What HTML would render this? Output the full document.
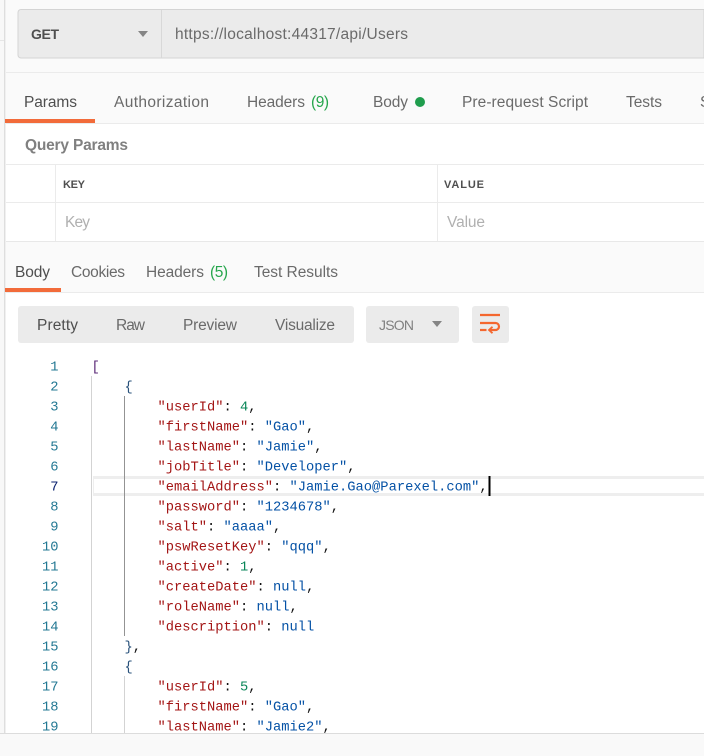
<!DOCTYPE html>
<html><head><meta charset="utf-8"><style>
html,body{margin:0;padding:0;background:#fff;width:704px;height:756px;overflow:hidden}
svg{display:block}
text{white-space:pre}
.u{font-family:"Liberation Sans",sans-serif;font-size:15.5px;fill:#6a6a6a}
.d{fill:#4f4f4f}
.b{font-weight:bold}
.g{fill:#26a64c}
.c{font-family:"Liberation Mono",monospace;font-size:13.75px;fill:#111}
.n{fill:#237893}
.k{fill:#a31515}
.s{fill:#0451a5}
.m{fill:#098658}
</style></head><body>
<svg width="704" height="756" viewBox="0 0 704 756" xmlns="http://www.w3.org/2000/svg">
<rect width="704" height="756" fill="#fff"/>
<!-- top request bar -->
<rect x="5" y="0" width="699" height="123" fill="#fafafa"/>
<rect x="5" y="72" width="699" height="1" fill="#ebebeb"/>
<rect x="5" y="123" width="699" height="1" fill="#ebebeb"/>
<path d="M704 9.5H21a3 3 0 0 0-3 3V55a3 3 0 0 0 3 3H704Z" fill="#ebebeb" stroke="#d4d4d4"/>
<rect x="161" y="10" width="1" height="48" fill="#d8d8d8"/>
<text class="u d b" x="31" y="39" textLength="28" style="font-size:14px">GET</text>
<path d="M138 31h10l-5 6z" fill="#858585"/>
<text class="u" x="175" y="39" textLength="233">https://localhost:44317/api/Users</text>
<!-- request tabs -->
<text class="u d" x="24" y="107" textLength="53">Params</text>
<rect x="5" y="119" width="90" height="4" fill="#f26b3a"/>
<text class="u" x="114" y="107" textLength="95">Authorization</text>
<text class="u" x="247" y="107" textLength="58">Headers</text>
<text class="u g" x="311" y="107" textLength="18">(9)</text>
<text class="u" x="373" y="107" textLength="35">Body</text>
<circle cx="420" cy="102" r="5" fill="#1f9d4d"/>
<text class="u" x="462" y="107" textLength="126">Pre-request Script</text>
<text class="u" x="626" y="107" textLength="36">Tests</text>
<text class="u" x="700" y="107">S</text>
<!-- query params -->
<text class="u b" x="25" y="150" textLength="103" style="fill:#808080">Query Params</text>
<rect x="5" y="164" width="699" height="1" fill="#ebebeb"/>
<rect x="5" y="202" width="699" height="1" fill="#ebebeb"/>
<rect x="55" y="165" width="1" height="76" fill="#ebebeb"/>
<rect x="437" y="165" width="1" height="76" fill="#ebebeb"/>
<text class="u d b" x="63" y="188" textLength="22" style="font-size:11px">KEY</text>
<text class="u d b" x="444" y="188" textLength="40" style="font-size:11px">VALUE</text>
<text class="u" x="65" y="227" textLength="25" style="fill:#b0b0b0">Key</text>
<text class="u" x="447" y="227" textLength="38" style="fill:#b0b0b0">Value</text>
<!-- response tabs -->
<rect x="5" y="241" width="699" height="51" fill="#fafafa"/>
<rect x="5" y="241" width="699" height="1" fill="#e8e8e8"/>
<rect x="5" y="292" width="699" height="1" fill="#ebebeb"/>
<text class="u d" x="15" y="277" textLength="35">Body</text>
<rect x="5" y="288" width="56" height="4" fill="#f26b3a"/>
<text class="u" x="71" y="277" textLength="54">Cookies</text>
<text class="u" x="146" y="277" textLength="58">Headers</text>
<text class="u g" x="210" y="277" textLength="18">(5)</text>
<text class="u" x="254" y="277" textLength="84">Test Results</text>
<!-- view toolbar -->
<rect x="18" y="306" width="336" height="37" rx="3" fill="#ebebeb"/>
<text class="u d" x="37" y="330" textLength="41">Pretty</text>
<text class="u" x="116" y="330" textLength="29">Raw</text>
<text class="u" x="183" y="330" textLength="54">Preview</text>
<text class="u" x="275" y="330" textLength="60">Visualize</text>
<rect x="366" y="306" width="93" height="37" rx="3" fill="#ebebeb"/>
<text class="u" x="379" y="330" textLength="35" style="fill:#808080;font-size:14px">JSON</text>
<path d="M432 321h10l-5 6z" fill="#858585"/>
<rect x="472" y="306" width="37" height="37" rx="3" fill="#ebebeb"/>
<g fill="none" stroke="#f4672f" stroke-width="2.200">
<path d="M480 315H500"/>
<path d="M480 323H495.500a3.500 3.500 0 0 1 0 7H490"/>
<path d="M480 330H486.500"/>
<path d="M492.500 326.800L489 330L492.500 333.200" stroke-width="1.800"/>
</g>
<!-- editor -->
<rect x="93" y="476" width="611" height="20" fill="#eeeeee"/>
<rect x="94" y="479" width="610" height="14" fill="#fff"/>
<rect x="91" y="376" width="1" height="357" fill="#d3d3d3"/>
<rect x="124" y="396" width="1" height="240" fill="#939393"/>
<rect x="124" y="676" width="1" height="57" fill="#d3d3d3"/>
<rect x="488.500" y="476" width="2" height="20" fill="#000"/>
<g class="c" transform="translate(0.500,-0.600)">
<text class="c n" text-anchor="end" x="58" y="371">1</text><text class="c n" text-anchor="end" x="58" y="391">2</text><text class="c n" text-anchor="end" x="58" y="411">3</text><text class="c n" text-anchor="end" x="58" y="431">4</text><text class="c n" text-anchor="end" x="58" y="451">5</text><text class="c n" text-anchor="end" x="58" y="471">6</text><text class="c" text-anchor="end" x="58" y="491" style="fill:#0b216f">7</text><text class="c n" text-anchor="end" x="58" y="511">8</text><text class="c n" text-anchor="end" x="58" y="531">9</text><text class="c n" text-anchor="end" x="58" y="551">10</text><text class="c n" text-anchor="end" x="58" y="571">11</text><text class="c n" text-anchor="end" x="58" y="591">12</text><text class="c n" text-anchor="end" x="58" y="611">13</text><text class="c n" text-anchor="end" x="58" y="631">14</text><text class="c n" text-anchor="end" x="58" y="651">15</text><text class="c n" text-anchor="end" x="58" y="671">16</text><text class="c n" text-anchor="end" x="58" y="691">17</text><text class="c n" text-anchor="end" x="58" y="711">18</text><text class="c n" text-anchor="end" x="58" y="731">19</text>
<text class="c" x="91" y="371" style="fill:#5b2a78">[</text>
<text class="c" x="124" y="391" style="fill:#27507a">{</text>
<text class="c" x="157" y="411"><tspan class="k">"userId"</tspan>: <tspan class="m">4</tspan>,</text>
<text class="c" x="157" y="431"><tspan class="k">"firstName"</tspan>: <tspan class="s">"Gao"</tspan>,</text>
<text class="c" x="157" y="451"><tspan class="k">"lastName"</tspan>: <tspan class="s">"Jamie"</tspan>,</text>
<text class="c" x="157" y="471"><tspan class="k">"jobTitle"</tspan>: <tspan class="s">"Developer"</tspan>,</text>
<text class="c" x="157" y="491"><tspan class="k">"emailAddress"</tspan>: <tspan class="s">"Jamie.Gao@Parexel.com"</tspan>,</text>
<text class="c" x="157" y="511"><tspan class="k">"password"</tspan>: <tspan class="s">"1234678"</tspan>,</text>
<text class="c" x="157" y="531"><tspan class="k">"salt"</tspan>: <tspan class="s">"aaaa"</tspan>,</text>
<text class="c" x="157" y="551"><tspan class="k">"pswResetKey"</tspan>: <tspan class="s">"qqq"</tspan>,</text>
<text class="c" x="157" y="571"><tspan class="k">"active"</tspan>: <tspan class="m">1</tspan>,</text>
<text class="c" x="157" y="591"><tspan class="k">"createDate"</tspan>: <tspan class="s">null</tspan>,</text>
<text class="c" x="157" y="611"><tspan class="k">"roleName"</tspan>: <tspan class="s">null</tspan>,</text>
<text class="c" x="157" y="631"><tspan class="k">"description"</tspan>: <tspan class="s">null</tspan></text>
<text class="c" x="124" y="651"><tspan style="fill:#27507a">}</tspan>,</text>
<text class="c" x="124" y="671" style="fill:#27507a">{</text>
<text class="c" x="157" y="691"><tspan class="k">"userId"</tspan>: <tspan class="m">5</tspan>,</text>
<text class="c" x="157" y="711"><tspan class="k">"firstName"</tspan>: <tspan class="s">"Gao"</tspan>,</text>
<text class="c" x="157" y="731"><tspan class="k">"lastName"</tspan>: <tspan class="s">"Jamie2"</tspan>,</text>
</g>
<!-- bottom bar -->
<rect x="0" y="733" width="704" height="23" fill="#f9f9f9"/>
<rect x="0" y="733" width="704" height="1" fill="#dcdcdc"/>
<!-- left edge -->
<rect x="0" y="0" width="4" height="733" fill="#f8f8f8"/>
<rect x="0" y="40" width="4" height="1" fill="#e6e6e6"/>
<rect x="4" y="0" width="1" height="733" fill="#dedede"/>
<rect x="5" y="0" width="1" height="733" fill="#f0f0f0"/>
<rect x="5" y="119" width="90" height="4" fill="#f26b3a"/>
<rect x="5" y="288" width="56" height="4" fill="#f26b3a"/>
</svg>
</body></html>
